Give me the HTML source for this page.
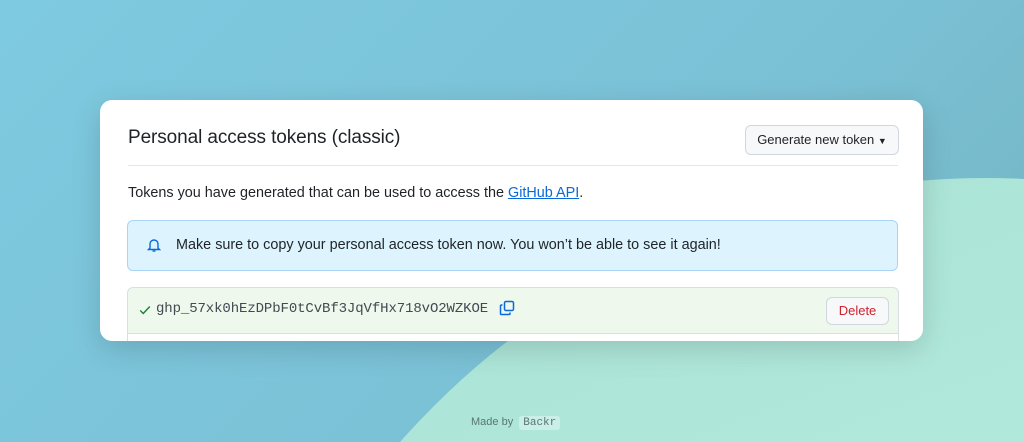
<!DOCTYPE html>
<html><head><style>
html,body{margin:0;width:1024px;height:442px;overflow:hidden}
.wrap{position:absolute;left:0;top:0;width:1024px;height:442px;overflow:hidden;font-family:"Liberation Sans",sans-serif;background:linear-gradient(135deg,#7ecae0 0%,#7bc1d6 60%,#72b4c0 100%);color:#1f2328}
.circle{position:absolute;left:205px;top:178px;width:1560px;height:1560px;border-radius:50%;background:linear-gradient(160deg,#a8e2d4,#b5ece0 40%,#b2ebe3)}
.card{position:absolute;left:100px;top:100px;width:823px;height:241px;background:#fff;border-radius:12px;overflow:hidden;box-shadow:0 8px 30px rgba(0,0,0,.15)}
h1{position:absolute;left:28px;top:27px;margin:0;font-weight:400;font-size:19px;letter-spacing:-0.1px}
.gen{position:absolute;left:645px;top:25px;width:152px;height:28px;border:1px solid #d0d7de;border-radius:6px;background:#f6f8fa;font-size:13px;line-height:28px;text-align:center}
.hr{position:absolute;left:28px;right:25px;top:65px;height:1px;background:#e3e6ea}
.p{position:absolute;left:28px;top:85px;font-size:14.4px}
.p a{color:#0969da;text-decoration:underline}
.ban{position:absolute;left:27px;top:120px;width:769px;height:49px;border:1px solid #a8d4f8;border-radius:6px;background:#ddf4ff;font-size:14.4px;line-height:49px}
.ban span{position:absolute;left:48px}
.tok{position:absolute;left:27px;top:187px;width:770px;height:80px;border:1px solid #d8dee4;border-radius:6px 6px 0 0;background:#eff8ec}
.tok .row2{position:absolute;left:0;right:0;top:45px;height:34px;background:#fff;border-top:1px solid #d8dee4}
.code{position:absolute;left:28px;top:13px;font-family:"Liberation Mono",monospace;font-size:14px;color:#424a53;letter-spacing:-0.1px}
.del{position:absolute;left:698px;top:9px;width:61px;height:26px;border:1px solid #d0d7de;border-radius:6px;background:#f6f8fa;color:#cf222e;font-size:13px;line-height:26px;text-align:center}
.made{position:absolute;left:471px;top:416px;font-size:11px;color:#5a7672}
.made b{font-weight:400;font-family:"Liberation Mono",monospace;background:rgba(255,255,255,.35);padding:1px 4px;border-radius:3px;margin-left:3px}
</style></head><body>
<div class="wrap">
<div class="circle"></div>
<div class="card">
<h1>Personal access tokens (classic)</h1>
<div class="gen">Generate new token <span style="font-size:9px">▼</span></div>
<div class="hr"></div>
<div class="p">Tokens you have generated that can be used to access the <a>GitHub API</a>.</div>
<div class="ban"><svg style="position:absolute;left:18px;top:16px" width="16" height="16" viewBox="0 0 16 16" fill="none" stroke="#0969da" stroke-width="1.4"><path d="M4 11V7a4 4 0 0 1 8 0v4l1.5 1.5h-11z"/><path d="M6.5 14h3"/></svg><span>Make sure to copy your personal access token now. You won’t be able to see it again!</span></div>
<div class="tok">
<svg style="position:absolute;left:10px;top:15px" width="14" height="14" viewBox="0 0 16 16" fill="none" stroke="#1a7f37" stroke-width="1.6"><path d="M2.5 8.5l3.5 3.5 7.5-8"/></svg>
<div class="code">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</div>
<svg style="position:absolute;left:371px;top:12px" width="16" height="16" viewBox="0 0 16 16" fill="none" stroke="#0969da" stroke-width="1.5"><rect x="5.5" y="1.5" width="9" height="9" rx="1.5"/><path d="M3.5 5H2.5a1 1 0 0 0-1 1v7.5a1 1 0 0 0 1 1H10a1 1 0 0 0 1-1v-1"/></svg>
<div class="del">Delete</div>
<div class="row2"></div>
</div>
</div>
<div class="made">Made by <b>Backr</b></div>
</div>
</body></html>
